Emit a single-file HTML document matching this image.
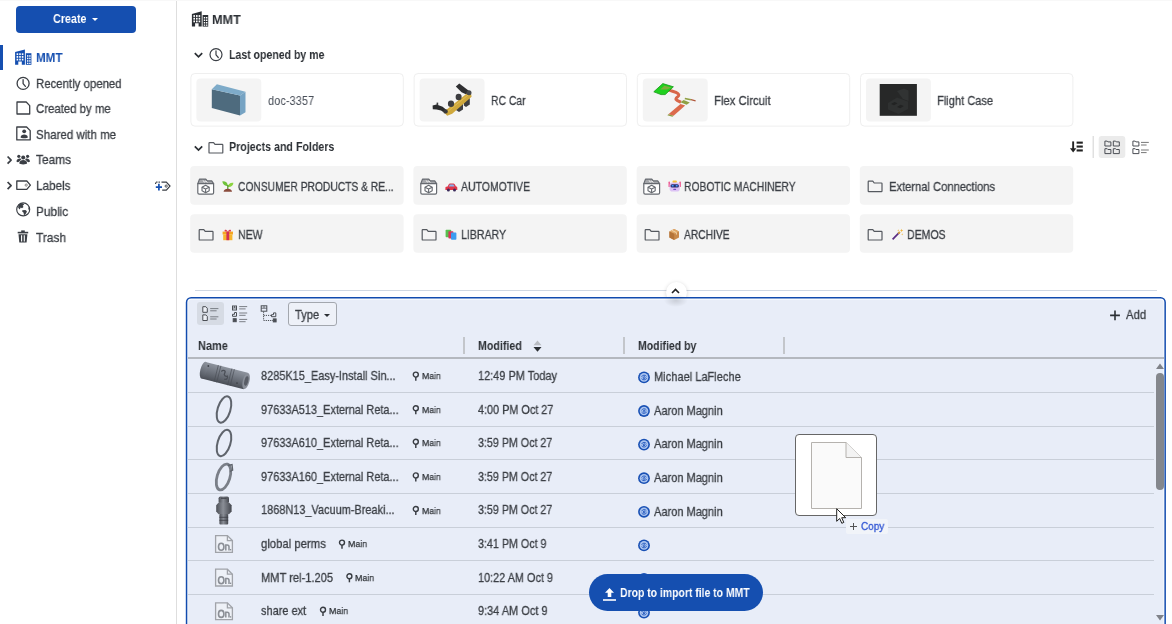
<!DOCTYPE html>
<html><head><meta charset="utf-8"><title>MMT</title>
<style>
html,body{margin:0;padding:0}
body{width:1172px;height:624px;overflow:hidden;position:relative;background:#fff;font-family:"Liberation Sans",sans-serif;color:#3b3f45}
.a{position:absolute}
.t{position:absolute;white-space:nowrap;transform-origin:0 50%;color:#3b3f45;will-change:transform}
svg{position:absolute;overflow:visible}
.card{position:absolute;box-sizing:border-box;border:1px solid #efefef;border-radius:4px;background:#fff}
.thumb{position:absolute;background:#f4f4f4;border-radius:4px}
.fold{position:absolute;background:#f3f3f3;border-radius:4px}
.rl{position:absolute;left:188px;width:966px;height:1px;background:#c9cfd9}
.cs{position:absolute;top:337px;width:2px;height:17px;background:#c3c6cb}
</style></head><body>

<!-- ===== Sidebar ===== -->
<div class="a" style="left:176px;top:0;width:1px;height:624px;background:#dedede"></div>
<div class="a" style="left:0;top:0;width:1172px;height:1px;background:#f8f8f8"></div>
<div class="a" style="left:16px;top:5.5px;width:120px;height:27px;border-radius:4px;background:#154fb0"></div>
<svg style="left:92.3px;top:17.8px" width="6" height="3" viewBox="0 0 6 3"><path d="M0 0h6l-3 3z" fill="#fff"/></svg>
<div class="a" style="left:0;top:45px;width:3px;height:25px;background:#154fb0"></div>
<svg style="left:0;top:0" width="1172" height="624" viewBox="0 0 1172 624">
<defs>
<g id="bld">
 <path d="M15.1 52.1L24.9 49.5V64.8H21.8V61.5H18.3V64.8H15.1z"/>
 <rect x="25.8" y="53.2" width="5.600" height="11.6"/>
 <g fill="#fff">
  <rect x="16.6" y="53.3" width="1.6" height="1.8"/><rect x="19.2" y="53.3" width="1.6" height="1.8"/><rect x="21.8" y="53.3" width="1.6" height="1.8"/>
  <rect x="16.6" y="56" width="1.6" height="1.8"/><rect x="19.2" y="56" width="1.6" height="1.8"/><rect x="21.8" y="56" width="1.6" height="1.8"/>
  <rect x="16.6" y="58.7" width="1.6" height="1.8"/><rect x="19.2" y="58.7" width="1.6" height="1.8"/><rect x="21.8" y="58.7" width="1.6" height="1.8"/>
  <rect x="27" y="55.2" width="1.4" height="1.5"/><rect x="29.2" y="55.2" width="1.4" height="1.5"/>
  <rect x="27" y="57.7" width="1.4" height="1.5"/><rect x="29.2" y="57.7" width="1.4" height="1.5"/>
  <rect x="27" y="60.2" width="1.4" height="1.5"/><rect x="29.2" y="60.2" width="1.4" height="1.5"/>
  <rect x="27" y="62.7" width="1.4" height="1.3"/><rect x="29.2" y="62.7" width="1.4" height="1.3"/>
 </g>
</g>
</defs>
<use href="#bld" fill="#154fb0"/>
<use href="#bld" fill="#2b2f34" transform="translate(176.8,-38.2)"/>
<g fill="none" stroke="#3b3f45" stroke-width="1.3" stroke-linejoin="round">
 <circle cx="23.1" cy="83.4" r="6"/>
 <path d="M23.1 79.6V83.6L25.4 86.3" stroke-linecap="round"/>
 <path d="M17 102H26.2L29.7 105.6V114H17z"/>
 <path d="M16.8 127H26.6L30.2 130.6V139.9H16.8z"/>
 <path d="M16.8 181H26.8L30.4 185.1L26.8 189.3H16.8z"/>
 <path d="M7.6 156.5L11.1 160.1L7.6 163.7" stroke-width="1.7"/>
 <path d="M7.6 182L11.1 185.6L7.6 189.2" stroke-width="1.7"/>
 <circle cx="23.2" cy="209.4" r="6.5" stroke-width="1.15"/>
</g>
<circle cx="26.2" cy="185.1" r="1.1" fill="none" stroke="#777" stroke-width="0.9"/>
<g fill="#3b3f45">
 <circle cx="24.2" cy="131.3" r="1.9"/><path d="M20.6 137.4C20.6 133.6 27.8 133.6 27.8 137.4C27.8 138.4 20.6 138.4 20.6 137.4z"/>
 <!-- teams -->
 <circle cx="23.2" cy="157.4" r="2"/><path d="M19.3 163.3C19.3 159 27.1 159 27.1 163.3C27.1 164.8 19.3 164.8 19.3 163.3z"/>
 <circle cx="18.8" cy="156.3" r="1.6"/><path d="M16.5 161.3C16.5 158 21.3 158 21.3 159.3L19 161.8C18 162.4 16.5 162.2 16.5 161.3z"/>
 <circle cx="27.6" cy="156.3" r="1.6"/><path d="M29.9 161.3C29.9 158 25.1 158 25.1 159.3L27.4 161.8C28.4 162.4 29.9 162.2 29.9 161.3z"/>
 <!-- globe continents -->
 <path d="M18.4 204.600L20.600 203.300L23.200 203.500L24.200 204.800L22.700 205.600L23.500 207.100L22 208.300L20.700 207.600L19.700 209.500L18.200 207.800z"/>
 <path d="M22.300 210.200L25.400 209.900L26.900 211.200L26.300 212.900L25 214.700L23.900 214.900L23.600 212.700L22.200 211.500z"/>
 <path d="M28.500 207L29.500 208.200L29.300 210.200L28.300 209.200z"/>
 <!-- trash -->
 <rect x="21.2" y="230.4" width="3.6" height="1.8"/>
 <rect x="17.7" y="231.8" width="10.5" height="1.6"/>
 <path d="M18.5 234.2H27.4L26.6 242.6H19.3z"/>
</g>
<g stroke="#fff" stroke-width="0.9">
 <path d="M21.600 235.200V241.400M24.300 235.200V241.400" stroke-width="1.100"/>
</g>
<!-- label + -->
<g fill="none" stroke="#3b3f45" stroke-width="1.2">
 <path d="M161.5 182.1H166.3L170 186.1L166.3 190.2H162.2"/>
 <path d="M155.6 184V182.1H160" stroke-dasharray="1.4 1"/>
 <circle cx="166.2" cy="186.1" r="1.1" stroke-width="0.9"/>
</g>
<path d="M158.9 183.8V190.4M155.8 187.1H162" stroke="#154fb0" stroke-width="1.7" fill="none"/>
</svg>


<!-- ===== Main header ===== -->
<!--MAINICONS-->

<!-- cards -->
<svg style="left:0;top:0" width="1172" height="624" viewBox="0 0 1172 624">
<rect x="190.9" y="73.5" width="212.4" height="52.6" rx="4" fill="#fff" stroke="#efefef" stroke-width="1"/>
<rect x="196.4" y="78.4" width="64.9" height="43.2" rx="4" fill="#f4f4f4"/>
<rect x="190.2" y="166.1" width="213.4" height="38.6" rx="4" fill="#f4f4f4"/>
<rect x="190.2" y="214.2" width="213.4" height="38.5" rx="4" fill="#f4f4f4"/>
<rect x="414.1" y="73.5" width="212.4" height="52.6" rx="4" fill="#fff" stroke="#efefef" stroke-width="1"/>
<rect x="419.6" y="78.4" width="64.9" height="43.2" rx="4" fill="#f4f4f4"/>
<rect x="413.4" y="166.1" width="213.4" height="38.6" rx="4" fill="#f4f4f4"/>
<rect x="413.4" y="214.2" width="213.4" height="38.5" rx="4" fill="#f4f4f4"/>
<rect x="637.3" y="73.5" width="212.4" height="52.6" rx="4" fill="#fff" stroke="#efefef" stroke-width="1"/>
<rect x="642.8" y="78.4" width="64.9" height="43.2" rx="4" fill="#f4f4f4"/>
<rect x="636.6" y="166.1" width="213.4" height="38.6" rx="4" fill="#f4f4f4"/>
<rect x="636.6" y="214.2" width="213.4" height="38.5" rx="4" fill="#f4f4f4"/>
<rect x="860.5" y="73.5" width="212.4" height="52.6" rx="4" fill="#fff" stroke="#efefef" stroke-width="1"/>
<rect x="866.0" y="78.4" width="64.9" height="43.2" rx="4" fill="#f4f4f4"/>
<rect x="859.8" y="166.1" width="213.4" height="38.6" rx="4" fill="#f4f4f4"/>
<rect x="859.8" y="214.2" width="213.4" height="38.5" rx="4" fill="#f4f4f4"/>
</svg>
<!--THUMBS-->

<!-- folders -->
<svg style="left:0;top:0" width="1172" height="624" viewBox="0 0 1172 624">
<defs>
 <path id="fld" d="M0.6 1.2Q0.6 0.6 1.2 0.6H5.2L6.6 2.4H13.8Q14.4 2.4 14.4 3V10.4Q14.4 11 13.8 11H1.2Q0.6 11 0.6 10.4z"/>
 <g id="proj" stroke="#666a70">
  <path d="M0.6 5.2L2.3 0.7H8.6L10 2.5H14.5L16.4 5.2z" fill="#a4a6aa"/>
  <path d="M5.6 2.1L7.2 3.5L8.6 2.7L10.2 4" stroke="#fff" stroke-width="0.9" fill="none"/>
  <path d="M0.6 5.2H16.4V14.4Q16.4 15.8 15 15.8H2Q0.6 15.8 0.6 14.4z" fill="#fff"/>
  <path d="M8.4 6.9L12 8.8V12.4L8.4 14.3L4.8 12.4V8.8z" stroke-width="1.1" fill="none"/>
  <path d="M4.8 8.8L8.4 10.6L12 8.8M8.4 10.6V14.3" stroke-width="1.1" fill="none"/>
 </g>
</defs>
<g fill="none" stroke="#2b2f34" stroke-width="1.7">
 <path d="M194.8 53.2L198.5 56.9L202.2 53.2"/>
 <path d="M194.8 146.4L198.5 150.1L202.2 146.4"/>
</g>
<g fill="none" stroke="#55595f" stroke-width="1.2" stroke-linejoin="round">
 <circle cx="216" stroke="#3b3f45" cy="54.6" r="6"/>
 <path d="M216 50.8V54.8L218.3 57.5" stroke-linecap="round" stroke="#3b3f45"/>
 <use href="#fld" x="208.4" y="142"/>
 <use href="#fld" x="198.6" y="229"/>
 <use href="#fld" x="421.6" y="229"/>
 <use href="#fld" x="644.6" y="229"/>
 <use href="#fld" x="867.6" y="229"/>
 <use href="#fld" x="867.6" y="180.6"/>
 <use href="#proj" x="197.2" y="178.4" stroke-width="1.2"/>
 <use href="#proj" x="420.2" y="178.4" stroke-width="1.2"/>
 <use href="#proj" x="643.2" y="178.4" stroke-width="1.2"/>
</g>
<!-- emoji: seedling -->
<g>
 <path d="M227.6 186C225.5 186 222.6 184.6 222.4 181.2C225.6 181 227.6 182.6 227.8 185.4z" fill="#6fc23a"/>
 <path d="M227.8 187C228 184.4 230 182.4 233.4 182.8C233.4 185.6 231 187.4 227.8 187z" fill="#8bd33f"/>
 <rect x="227.2" y="185" width="1.2" height="4" fill="#4c9a2a"/>
 <path d="M223.6 191.8C223.6 187.6 232 187.6 232 191.8z" fill="#8a4b3c"/>
</g>
<!-- car -->
<g>
 <path d="M445.4 190V187.8Q445.4 187 446.2 186.8L447.6 186.4L448.8 184.3Q449.2 183.6 450 183.6H453.4Q454.2 183.6 454.7 184.3L456 186.4L456.6 186.6Q457.3 186.9 457.3 187.7V190z" fill="#e0364a"/>
 <path d="M448.8 186.4L449.8 184.6H453.4L454.6 186.4z" fill="#86b4ee"/>
 <circle cx="448.4" cy="190.1" r="1.5" fill="#3a2a5a"/><circle cx="454.5" cy="190.1" r="1.5" fill="#3a2a5a"/>
</g>
<!-- robot -->
<g>
 <rect x="668.5" y="181.600" width="1.500" height="5.400" rx="0.600" fill="#ee5c92"/><rect x="679.400" y="181.600" width="1.500" height="5.400" rx="0.600" fill="#ee5c92"/>
 <rect x="672.5" y="180.600" width="4.400" height="2.400" rx="1" fill="#f5c33b"/>
 <rect x="669.600" y="182.600" width="10.200" height="9" rx="2.800" fill="#dcc2f4"/>
 <rect x="670.500" y="184.200" width="8.400" height="3.300" rx="1.500" fill="#2b2a6a"/>
 <rect x="671.700" y="185" width="2" height="1.600" rx="0.500" fill="#3fa0ff"/><rect x="675.700" y="185" width="2" height="1.600" rx="0.500" fill="#3fa0ff"/>
 <rect x="673.300" y="188.800" width="2.800" height="1.300" rx="0.400" fill="#7b4fc4"/>
</g>
<!-- gift -->
<g>
 <rect x="222.6" y="231.6" width="10.4" height="2.9" fill="#f5a623"/>
 <rect x="223.2" y="234.4" width="9.2" height="5.800" fill="#f8b62e"/>
 <rect x="226.4" y="231.6" width="2.800" height="8.600" fill="#d22f56"/>
 <path d="M227.8 231.6C226.4 229 223.8 229.4 224.8 231.6zM227.8 231.6C229.2 229 231.8 229.4 230.8 231.6z" fill="#e03a4e"/>
</g>
<!-- books -->
<g>
 <rect x="445.6" y="229.8" width="5.6" height="7.4" rx="0.8" fill="#58c04e"/>
 <rect x="448.4" y="231.2" width="5" height="7.4" rx="0.8" fill="#d8365c"/>
 <rect x="451" y="232.6" width="5.4" height="7.2" rx="0.8" fill="#3c9cf0"/>
</g>
<!-- package -->
<g>
 <path d="M674.2 229L679 231.4V237.4L674.2 240L669.4 237.4V231.4z" fill="#c98a4b"/>
 <path d="M674.2 229L679 231.4L674.2 233.8L669.4 231.4z" fill="#e0a868"/>
 <path d="M674.2 233.8V240L669.4 237.4V231.4z" fill="#b57438"/>
 <path d="M671.6 230.2L676.4 232.6V234.6" fill="none" stroke="#f3d9b0" stroke-width="0.9"/>
</g>
<!-- wand -->
<g>
 <path d="M892.6 239.4L899.4 232.4" stroke="#5b2c83" stroke-width="1.7" fill="none"/>
 <path d="M898.2 233.6L900 231.8" stroke="#d9a43a" stroke-width="1.7" fill="none"/>
 <path d="M901.6 228.8l.5 1.2 1.2.5-1.2.5-.5 1.2-.5-1.2-1.2-.5 1.2-.5zM898.2 229.2l.3.8.8.3-.8.3-.3.8-.3-.8-.8-.3.8-.3zM902.2 233.2l.3.8.8.3-.8.3-.3.8-.3-.8-.8-.3.8-.3z" fill="#f0b63c"/>
</g>
<!-- sort / view toggle -->
<g fill="#222">
 <rect x="1072.2" y="141.4" width="1.9" height="8"/>
 <path d="M1069.9 148.2H1076.4L1073.15 152.4z"/>
 <rect x="1076.6" y="141.6" width="6.2" height="2.1"/><rect x="1076.6" y="145.5" width="6.2" height="2.1"/><rect x="1076.6" y="149.4" width="6.2" height="2.1"/>
</g>
<rect x="1092.6" y="136" width="1.2" height="22" fill="#d9d9d9"/>
<rect x="1098.7" y="136" width="26.6" height="22" rx="3" fill="#ebebeb"/>
<g fill="none" stroke="#4a4e54" stroke-width="1">
 <path id="sf" d="M1104.9 141.1H1107.2L1107.9 141.9H1110.9V146H1104.9z"/>
 <use href="#sf" x="8.4"/><use href="#sf" y="7.6"/><use href="#sf" x="8.4" y="7.6"/>
 <use href="#sf" x="28"/><use href="#sf" x="28" y="7.6"/>
 <path d="M1141 142.4H1148.8M1141 145H1146.6M1141 150H1148.8M1141 152.6H1146.6" stroke="#777" />
</g>
</svg>


<!-- divider -->
<div class="a" style="left:195px;top:289.5px;width:962px;height:1.5px;background:#cfd7e2"></div>
<div class="a" style="left:665.5px;top:282px;width:21px;height:21px;border-radius:11px;background:#fff;box-shadow:0 1px 4px rgba(0,0,0,.18)"></div>

<!-- ===== Table panel ===== -->
<svg style="left:0;top:0" width="1172" height="624" viewBox="0 0 1172 624">
<defs><radialGradient id="sm"><stop offset="0" stop-color="#000" stop-opacity="0.13"/><stop offset="1" stop-color="#000" stop-opacity="0"/></radialGradient></defs>
<rect x="186.55" y="297.65" width="978.6" height="340" rx="4.6" fill="#fbfcfe" stroke="#114bae" stroke-width="1.5"/>
<rect x="188.2" y="299.7" width="975.3" height="340" rx="3" fill="#e8edf8"/>
<ellipse cx="675.9" cy="300.5" rx="12" ry="6.5" fill="url(#sm)"/>
</svg>
<svg style="left:671.1px;top:288.3px" width="9" height="6" viewBox="0 0 9 6"><path d="M1 5l3.5-3.5L8 5" fill="none" stroke="#222" stroke-width="1.6"/></svg>
<!-- toolbar -->
<div class="a" style="left:197px;top:302px;width:27px;height:23px;border-radius:3px;background:#d6dbe4"></div>
<div class="a" style="left:288px;top:302px;width:49px;height:24px;box-sizing:border-box;border:1px solid #a3a7ae;border-radius:3px;background:#eef1f8"></div>
<svg style="left:324px;top:313.5px" width="6" height="3" viewBox="0 0 6 3"><path d="M0 0h6l-3 3z" fill="#2b2f34"/></svg>
<!--TOOLICONS-->
<!-- header -->
<div class="cs" style="left:463px"></div>
<div class="cs" style="left:623px"></div>
<div class="cs" style="left:782.5px"></div>
<div class="a" style="left:188px;top:357px;width:976px;height:1.5px;background:#b4b8bf"></div>
<svg style="left:532.5px;top:339.5px" width="9" height="12" viewBox="0 0 9 12"><path d="M0.5 5.2h8L4.5 0.4z" fill="#b9bcc2"/><path d="M0.5 7h8L4.5 11.8z" fill="#2b2f34"/></svg>
<!-- row lines -->
<div class="rl" style="top:392px"></div>
<div class="rl" style="top:425.5px"></div>
<div class="rl" style="top:459px"></div>
<div class="rl" style="top:493px"></div>
<div class="rl" style="top:526.5px"></div>
<div class="rl" style="top:560px"></div>
<div class="rl" style="top:593.5px"></div>
<svg style="left:0;top:0" width="1172" height="624" viewBox="0 0 1172 624">
<defs>
 <linearGradient id="cyl" x1="0" y1="0" x2="0" y2="1"><stop offset="0" stop-color="#9a9ea6"/><stop offset="0.35" stop-color="#6d717a"/><stop offset="1" stop-color="#4a4d55"/></linearGradient>
 <linearGradient id="plg" x1="0" y1="0" x2="1" y2="0"><stop offset="0" stop-color="#4d5057"/><stop offset="0.45" stop-color="#8a8e96"/><stop offset="1" stop-color="#44474e"/></linearGradient>
 <g id="ondoc">
  <path d="M0.6 0.6H12.4L17.4 5.6V17.4H0.6z" fill="#eef1f7" stroke="#a0a3a9" stroke-width="1.3"/>
  <path d="M12.4 0.6V5.6H17.4" fill="none" stroke="#a0a3a9" stroke-width="1.3"/>
  <path d="M6.2 8.2C8 8.2 8.9 9.6 8.9 11.7C8.9 13.8 8 15.2 6.2 15.2C4.4 15.2 3.5 13.8 3.5 11.7C3.5 9.6 4.4 8.2 6.2 8.2z" fill="none" stroke="#8b8f96" stroke-width="1.6"/>
  <path d="M10.8 15.4V10H12.2Q14 10 14 11.8V15.4" fill="none" stroke="#8b8f96" stroke-width="1.5"/>
  <rect x="15" y="14" width="1.2" height="1.4" fill="#8b8f96"/>
 </g>
 <g id="pin">
  <circle cx="3.4" cy="3.3" r="2.5" fill="none" stroke="#383c42" stroke-width="1.4"/>
  <path d="M3.4 5.8V9.4" stroke="#383c42" stroke-width="1.45"/>
 </g>
 <g id="av">
  <circle cx="6" cy="6" r="5.9" fill="#1850b4"/>
  <circle cx="6" cy="6" r="4.3" fill="#a9c3ef"/>
  <path d="M3.6 5.4C4.400 3.400 7.400 3.200 8.400 5M8.600 6.800C7.800 8.800 4.800 9 3.600 7.200M5 6.200L6.400 5L7.200 6.400L5.800 7.400z" fill="none" stroke="#2f62c2" stroke-width="1"/>
 </g>
</defs>
<!-- card thumbnails -->
<g>
 <path d="M211.8 89.2L240 95.6V115.6L211.8 107.9z" fill="#4e6b7e"/>
 <path d="M211.8 89.2L216.9 84.2L245.5 91.8L240 95.6z" fill="#7eabc9"/>
 <path d="M240 95.6L245.5 91.8V112.2L240 115.6z" fill="#76a3c3"/>
</g>
<g>
 <path d="M455.8 86.6L459.3 83.6L468.8 90.8L466.4 94.6L461.6 92.2z" fill="#2e2f31"/>
 <path d="M432.6 105.4L436.6 104.6L442.6 106.8L447.4 110.8L445.4 113.6L441 110.4L436.6 109.4L432.8 109.2z" fill="#2a2b2d"/>
 <rect x="436.6" y="102.600" width="1.600" height="2.600" fill="#3a3b3d"/>
 <path d="M456 105L460 102.400L463 104V109.400L459 112L456 110z" fill="#3e3f42"/>
 <path d="M463.800 99.200L467.400 96.800L469.800 98.400V104.400L466 107L463.800 105.400z" fill="#3e3f42"/>
 <path d="M443.400 111.800L448 108.400L467.200 93.300L470.800 92.400L471.600 96.800L452.200 113.800L447.200 115.800z" fill="#cfa83c"/>
 <path d="M446 112.800L468.600 94.600" stroke="#e3c056" stroke-width="0.9" fill="none"/>
 <ellipse cx="451" cy="103.800" rx="3.100" ry="3.300" fill="#3c3d40"/>
 <ellipse cx="458.600" cy="97" rx="3" ry="3.200" fill="#3c3d40"/>
 <circle cx="469" cy="92.800" r="2.500" fill="#47494c"/>
 <circle cx="445.600" cy="111.400" r="2.200" fill="#38393b"/>
</g>
<g>
 <path d="M669 90.200C673 91.600 676 92 678 93.600C681 96 675 97.600 676 99.400C677 101 679 101.400 681 102.200" fill="none" stroke="#d8674a" stroke-width="3"/>
 <path d="M680.5 104L685.2 105.600L673.600 115.800L668.400 114.200z" fill="#dc6a4c"/>
 <path d="M668.400 114.200L673.600 115.800L672.400 116.800L667.400 115.200z" fill="#8a9a3e"/>
 <path d="M653.800 91.800L662.800 83.600L673.400 86.800L665.200 94.600L661 94.600z" fill="#1fd11f" stroke="#179a17" stroke-width="0.8"/>
 <path d="M660.200 89.400L664.400 85.800L671.400 87.400L667 89.600z" fill="#7fae3c"/>
 <path d="M680.400 102.200L683.600 100.100L689.800 102.500L686.600 104.700z" fill="#8fa043"/>
 <path d="M685 97.800L691.200 99L690.600 100.400L684.600 99.200z" fill="#8fa043"/>
 <path d="M691 99.600L695.600 100.800" stroke="#b0563a" stroke-width="1.200"/>
</g>
<g>
 <rect x="879.700" y="84" width="37.200" height="31.800" fill="#272828"/>
 <path d="M888 103L897 97.500L908 101.500V109L898.500 114L888 109.500z" fill="#2f3131"/>
 <path d="M897 91L904 88.500L908.500 90.500V101L903 99z" fill="#313333"/>
 <path d="M891 104L894.500 102L897.500 103.200L894 105.300zM897 107L900.500 104.800L903.800 106L900.300 108.300z" fill="#222323"/>
</g>
<!-- toolbar icons -->
<g fill="none" stroke="#4a4e54" stroke-width="1">
 <path d="M202.800 306.700H205.800L207.300 308.200V312.300H202.800zM202.800 314.900H205.800L207.300 316.400V320.500H202.800z" fill="#eef1f7"/>
 <path d="M210.200 308.600H218.400M210.200 310.800H216.600M210.200 316.800H218.400M210.200 319H216.600" stroke="#7a7e85"/>
 <rect x="232.500" y="306" width="4" height="4"/><path d="M232.500 308H236.500M234.500 306V308" stroke-width="0.8"/>
 <path d="M232.500 316.300V314.300H234.500V312.500H236.500V316.300z"/>
 <rect x="233.200" y="318.700" width="3" height="3" fill="#4a4e54"/>
 <path d="M239.200 306.600H247.200M239.200 308.900H245.600M239.200 313H247.200M239.200 315.300H245.600M239.200 319.400H247.200M239.200 321.700H245.600" stroke="#7a7e85"/>
 <rect x="261.200" y="305.800" width="5.600" height="5.400"/><path d="M261.200 308.200H266.800M264 305.800V308.200" stroke-width="0.8"/>
 <path d="M263.600 311.600V320.500H273" stroke-dasharray="1.2 1"/><path d="M263.600 315.400H271" stroke-dasharray="1.2 1"/>
 <path d="M271.500 316.700V314.700H273.500V312.900H275.800V316.700z"/>
 <rect x="273.300" y="318.900" width="2.800" height="3" fill="#4a4e54"/>
</g>
<path d="M1115 310.500V320.300M1110.100 315.400H1119.900" stroke="#2b2f34" stroke-width="1.600" fill="none"/>
<!-- row thumbnails -->
<g>
 <linearGradient id="cg" gradientUnits="userSpaceOnUse" x1="205.7" y1="361.9" x2="201.5" y2="378.5"><stop offset="0" stop-color="#8e949e"/><stop offset="0.3" stop-color="#7b818b"/><stop offset="0.75" stop-color="#5d626b"/><stop offset="1" stop-color="#4a4e56"/></linearGradient>
 <path d="M205.7 361.9 L247.9 372.7 L243.7 389.3 L201.5 378.5 z" fill="url(#cg)"/>
 <ellipse cx="203.6" cy="370.2" rx="3.3" ry="8.6" transform="rotate(14.4 203.6 370.2)" fill="url(#cg)"/>
 <path d="M218.4 365.1 L214.1 381.8" stroke="#4a4e56" stroke-width="0.9" opacity="0.75"/>
 <path d="M220.9 365.8 L216.7 382.4" stroke="#4a4e56" stroke-width="0.9" opacity="0.75"/>
 <path d="M231.9 368.6 L227.6 385.2" stroke="#4a4e56" stroke-width="0.9" opacity="0.75"/>
 <path d="M234.4 369.2 L230.2 385.9" stroke="#4a4e56" stroke-width="0.9" opacity="0.75"/>
 <ellipse cx="246.1" cy="381.0" rx="3.3" ry="8.3" transform="rotate(14.4 246.1 381.0)" fill="#8a8f99"/>
 <ellipse cx="246.3" cy="381.0" rx="1.9" ry="4.8" transform="rotate(14.4 246.3 381.0)" fill="#595d66"/>
 <path d="M221.3 371.5 c2 -2 5 -1 3.4 1.600 c-1.400 2.200 1 3.800 2.600 3 c1 2 -1 4 -3 3" fill="none" stroke="#4b4f57" stroke-width="1.300"/>
 <circle cx="208.3" cy="366.0" r="0.9" fill="#3f434a"/><circle cx="237.0" cy="383.1" r="0.9" fill="#3f434a"/>
</g>
<g fill="none" stroke="#5f646c">
 <ellipse cx="224" cy="409.500" rx="6.400" ry="13.600" transform="rotate(17 224 409.500)" stroke-width="2"/>
 <ellipse cx="224" cy="443" rx="6.400" ry="13.600" transform="rotate(17 224 443)" stroke-width="2"/>
 <ellipse cx="223.500" cy="477" rx="6.400" ry="13.400" transform="rotate(17 223.500 477)" stroke-width="2.800" stroke="#7a7f88"/>
 <path d="M228 465.500L232 464.500L232.600 470L230 471.500" stroke-width="1.400"/>
</g>
<g>
 <rect x="218.600" y="496.400" width="10.400" height="6.800" rx="1.800" fill="url(#plg)"/>
 <path d="M216.200 505.200L218.600 502.600H229L231.600 505.200V511.400L229 514.200H218.600L216.200 511.400z" fill="url(#plg)"/>
 <rect x="219.400" y="514" width="8.800" height="10.400" rx="1" fill="url(#plg)"/>
 <path d="M219.400 517.300H228.200M219.400 520.300H228.200" stroke="#3d4047" stroke-width="0.800"/>
 <path d="M221 498.200H226.600" stroke="#40434a" stroke-width="1.200"/>
</g>
<use href="#ondoc" x="215" y="535"/>
<use href="#ondoc" x="215" y="568.600"/>
<use href="#ondoc" x="215" y="602.200"/>
<!-- pins -->
<use href="#pin" x="412.400" y="371.300"/><use href="#pin" x="412.400" y="404.900"/><use href="#pin" x="412.400" y="438.500"/><use href="#pin" x="412.400" y="472.100"/><use href="#pin" x="412.400" y="505.700"/>
<use href="#pin" x="338.600" y="539.300"/><use href="#pin" x="346" y="572.900"/><use href="#pin" x="319.600" y="606.500"/>
<!-- avatars -->
<use href="#av" x="638" y="371.400"/><use href="#av" x="638" y="405"/><use href="#av" x="638" y="438.600"/><use href="#av" x="638" y="472.200"/><use href="#av" x="638" y="505.800"/><use href="#av" x="638" y="539.400"/><use href="#av" x="638" y="573"/><use href="#av" x="638" y="606.600"/>
</svg>

<!-- scrollbar -->
<svg style="left:1155.5px;top:363px" width="8" height="6" viewBox="0 0 8 6"><path d="M0 6h8L4 0.5z" fill="#7f8289"/></svg>
<div class="a" style="left:1156px;top:373px;width:7.5px;height:117px;border-radius:4px;background:#84878d"></div>
<svg style="left:1155.5px;top:615px" width="8" height="6" viewBox="0 0 8 6"><path d="M0 0h8L4 5.5z" fill="#7f8289"/></svg>

<!-- drop pill -->
<div class="a" style="left:589px;top:574px;width:173.5px;height:37px;border-radius:18.5px;background:#154fb0"></div>
<svg style="left:603px;top:587.5px" width="13" height="13" viewBox="0 0 13 13"><path d="M6.5 0L11 4.8H8.3V9H4.7V4.8H2z" fill="#fff"/><rect x="0" y="11.2" width="13" height="1.6" fill="#fff"/></svg>

<!-- drag ghost -->
<div class="a" style="left:795px;top:434px;width:82px;height:82px;box-sizing:border-box;border:1px solid #666;border-radius:4px;background:#fff"></div>
<svg style="left:811px;top:442px" width="51" height="67" viewBox="0 0 51 67"><path d="M0.5 0.5H35L50.5 15.5V66.5H0.5z" fill="#fafafa" stroke="#b5b2ae" stroke-width="1"/><path d="M35 0.5V15.5H50.5" fill="#f3f3f3" stroke="#b5b2ae" stroke-width="1"/></svg>
<div class="a" style="left:846px;top:519px;width:42px;height:14.5px;border-radius:2px;background:#f1f4f9"></div>
<svg style="left:849.5px;top:522.5px" width="7" height="7" viewBox="0 0 7 7"><path d="M3.5 0v7M0 3.5h7" stroke="#555" stroke-width="1"/></svg>
<svg style="left:836px;top:507.5px" width="11" height="17" viewBox="0 0 11 17"><path d="M0.7 0.7V13.3L3.7 10.5L5.8 15.3L7.8 14.4L5.7 9.7H9.7z" fill="#fff" stroke="#222" stroke-width="1"/></svg>

<span class="t" style="left:53.4px;top:10.2px;font-size:13px;line-height:17px;transform:scaleX(0.8253);font-weight:700;color:#fff">Create</span>
<span class="t" style="left:36.4px;top:49.0px;font-size:13px;line-height:17px;transform:scaleX(0.8916);font-weight:700;color:#154fb0">MMT</span>
<span class="t" style="left:36.2px;top:74.9px;font-size:13px;line-height:17px;transform:scaleX(0.8772);-webkit-text-stroke:0.3px">Recently opened</span>
<span class="t" style="left:36.2px;top:100.3px;font-size:13px;line-height:17px;transform:scaleX(0.8761);-webkit-text-stroke:0.3px">Created by me</span>
<span class="t" style="left:36.2px;top:125.6px;font-size:13px;line-height:17px;transform:scaleX(0.8868);-webkit-text-stroke:0.3px">Shared with me</span>
<span class="t" style="left:36.2px;top:150.5px;font-size:13px;line-height:17px;transform:scaleX(0.9165);-webkit-text-stroke:0.3px">Teams</span>
<span class="t" style="left:36.2px;top:176.7px;font-size:13px;line-height:17px;transform:scaleX(0.9005);-webkit-text-stroke:0.3px">Labels</span>
<span class="t" style="left:36.2px;top:202.5px;font-size:13px;line-height:17px;transform:scaleX(0.9062);-webkit-text-stroke:0.3px">Public</span>
<span class="t" style="left:36.2px;top:228.6px;font-size:13px;line-height:17px;transform:scaleX(0.9191);-webkit-text-stroke:0.3px">Trash</span>
<span class="t" style="left:212.3px;top:10.5px;font-size:13px;line-height:17px;transform:scaleX(0.9727);font-weight:700;color:#2b2f34">MMT</span>
<span class="t" style="left:229.2px;top:45.5px;font-size:13px;line-height:17px;transform:scaleX(0.8102);font-weight:700;color:#2b2f34">Last opened by me</span>
<span class="t" style="left:229.2px;top:138.2px;font-size:13px;line-height:17px;transform:scaleX(0.8196);font-weight:700;color:#2b2f34">Projects and Folders</span>
<span class="t" style="left:267.6px;top:91.5px;font-size:13px;line-height:17px;transform:scaleX(0.8521);color:#4a505a">doc-3357</span>
<span class="t" style="left:490.7px;top:91.5px;font-size:13px;line-height:17px;transform:scaleX(0.7983);-webkit-text-stroke:0.3px">RC Car</span>
<span class="t" style="left:714.2px;top:91.5px;font-size:13px;line-height:17px;transform:scaleX(0.8706);-webkit-text-stroke:0.3px">Flex Circuit</span>
<span class="t" style="left:937.2px;top:91.5px;font-size:13px;line-height:17px;transform:scaleX(0.8532);-webkit-text-stroke:0.3px">Flight Case</span>
<span class="t" style="left:237.7px;top:177.6px;font-size:13px;line-height:17px;transform:scaleX(0.7891);-webkit-text-stroke:0.3px">CONSUMER PRODUCTS &amp; RE...</span>
<span class="t" style="left:460.7px;top:177.6px;font-size:13px;line-height:17px;transform:scaleX(0.8061);-webkit-text-stroke:0.3px">AUTOMOTIVE</span>
<span class="t" style="left:684.2px;top:177.6px;font-size:13px;line-height:17px;transform:scaleX(0.7937);-webkit-text-stroke:0.3px">ROBOTIC MACHINERY</span>
<span class="t" style="left:889.2px;top:177.6px;font-size:13px;line-height:17px;transform:scaleX(0.8586);-webkit-text-stroke:0.3px">External Connections</span>
<span class="t" style="left:237.7px;top:225.6px;font-size:13px;line-height:17px;transform:scaleX(0.8107);-webkit-text-stroke:0.3px">NEW</span>
<span class="t" style="left:460.7px;top:225.6px;font-size:13px;line-height:17px;transform:scaleX(0.8140);-webkit-text-stroke:0.3px">LIBRARY</span>
<span class="t" style="left:684.2px;top:225.6px;font-size:13px;line-height:17px;transform:scaleX(0.7890);-webkit-text-stroke:0.3px">ARCHIVE</span>
<span class="t" style="left:907.2px;top:225.6px;font-size:13px;line-height:17px;transform:scaleX(0.8097);-webkit-text-stroke:0.3px">DEMOS</span>
<span class="t" style="left:294.7px;top:306.1px;font-size:13px;line-height:17px;transform:scaleX(0.8550);-webkit-text-stroke:0.3px">Type</span>
<span class="t" style="left:1126.0px;top:306.0px;font-size:13px;line-height:17px;transform:scaleX(0.8686);-webkit-text-stroke:0.3px">Add</span>
<span class="t" style="left:198.4px;top:337.9px;font-size:12px;line-height:16px;transform:scaleX(0.9147);font-weight:700;color:#2b2f34">Name</span>
<span class="t" style="left:478.3px;top:337.9px;font-size:12px;line-height:16px;transform:scaleX(0.8879);font-weight:700;color:#2b2f34">Modified</span>
<span class="t" style="left:638.4px;top:337.9px;font-size:12px;line-height:16px;transform:scaleX(0.8744);font-weight:700;color:#2b2f34">Modified by</span>
<span class="t" style="left:260.7px;top:367.0px;font-size:13px;line-height:17px;transform:scaleX(0.8427);-webkit-text-stroke:0.3px">8285K15_Easy-Install Sin...</span>
<span class="t" style="left:421.5px;top:370.2px;font-size:9px;line-height:13px;transform:scaleX(0.9633);-webkit-text-stroke:0.25px;color:#2f3338">Main</span>
<span class="t" style="left:260.7px;top:400.6px;font-size:13px;line-height:17px;transform:scaleX(0.8424);-webkit-text-stroke:0.3px">97633A513_External Reta...</span>
<span class="t" style="left:421.5px;top:403.8px;font-size:9px;line-height:13px;transform:scaleX(0.9633);-webkit-text-stroke:0.25px;color:#2f3338">Main</span>
<span class="t" style="left:260.7px;top:434.2px;font-size:13px;line-height:17px;transform:scaleX(0.8424);-webkit-text-stroke:0.3px">97633A610_External Reta...</span>
<span class="t" style="left:421.5px;top:437.4px;font-size:9px;line-height:13px;transform:scaleX(0.9633);-webkit-text-stroke:0.25px;color:#2f3338">Main</span>
<span class="t" style="left:260.7px;top:467.8px;font-size:13px;line-height:17px;transform:scaleX(0.8424);-webkit-text-stroke:0.3px">97633A160_External Reta...</span>
<span class="t" style="left:421.5px;top:471.0px;font-size:9px;line-height:13px;transform:scaleX(0.9633);-webkit-text-stroke:0.25px;color:#2f3338">Main</span>
<span class="t" style="left:260.7px;top:501.4px;font-size:13px;line-height:17px;transform:scaleX(0.8416);-webkit-text-stroke:0.3px">1868N13_Vacuum-Breaki...</span>
<span class="t" style="left:421.5px;top:504.6px;font-size:9px;line-height:13px;transform:scaleX(0.9633);-webkit-text-stroke:0.25px;color:#2f3338">Main</span>
<span class="t" style="left:260.7px;top:535.0px;font-size:13px;line-height:17px;transform:scaleX(0.8719);-webkit-text-stroke:0.3px">global perms</span>
<span class="t" style="left:347.7px;top:538.2px;font-size:9px;line-height:13px;transform:scaleX(0.9787);-webkit-text-stroke:0.25px;color:#2f3338">Main</span>
<span class="t" style="left:260.7px;top:568.6px;font-size:13px;line-height:17px;transform:scaleX(0.8553);-webkit-text-stroke:0.3px">MMT rel-1.205</span>
<span class="t" style="left:355.2px;top:571.8px;font-size:9px;line-height:13px;transform:scaleX(0.9787);-webkit-text-stroke:0.25px;color:#2f3338">Main</span>
<span class="t" style="left:260.7px;top:602.2px;font-size:13px;line-height:17px;transform:scaleX(0.8451);-webkit-text-stroke:0.3px">share ext</span>
<span class="t" style="left:328.7px;top:605.4px;font-size:9px;line-height:13px;transform:scaleX(0.9787);-webkit-text-stroke:0.25px;color:#2f3338">Main</span>
<span class="t" style="left:478.3px;top:367.0px;font-size:13px;line-height:17px;transform:scaleX(0.8429);-webkit-text-stroke:0.3px">12:49 PM Today</span>
<span class="t" style="left:478.3px;top:400.6px;font-size:13px;line-height:17px;transform:scaleX(0.8347);-webkit-text-stroke:0.3px">4:00 PM Oct 27</span>
<span class="t" style="left:478.3px;top:434.2px;font-size:13px;line-height:17px;transform:scaleX(0.8226);-webkit-text-stroke:0.3px">3:59 PM Oct 27</span>
<span class="t" style="left:478.3px;top:467.8px;font-size:13px;line-height:17px;transform:scaleX(0.8226);-webkit-text-stroke:0.3px">3:59 PM Oct 27</span>
<span class="t" style="left:478.3px;top:501.4px;font-size:13px;line-height:17px;transform:scaleX(0.8226);-webkit-text-stroke:0.3px">3:59 PM Oct 27</span>
<span class="t" style="left:478.3px;top:535.0px;font-size:13px;line-height:17px;transform:scaleX(0.8244);-webkit-text-stroke:0.3px">3:41 PM Oct 9</span>
<span class="t" style="left:478.3px;top:568.6px;font-size:13px;line-height:17px;transform:scaleX(0.8370);-webkit-text-stroke:0.3px">10:22 AM Oct 9</span>
<span class="t" style="left:478.3px;top:602.2px;font-size:13px;line-height:17px;transform:scaleX(0.8437);-webkit-text-stroke:0.3px">9:34 AM Oct 9</span>
<span class="t" style="left:654.1px;top:368.2px;font-size:13px;line-height:17px;transform:scaleX(0.8509);-webkit-text-stroke:0.3px">Michael LaFleche</span>
<span class="t" style="left:654.1px;top:401.8px;font-size:13px;line-height:17px;transform:scaleX(0.8486);-webkit-text-stroke:0.3px">Aaron Magnin</span>
<span class="t" style="left:654.1px;top:435.4px;font-size:13px;line-height:17px;transform:scaleX(0.8486);-webkit-text-stroke:0.3px">Aaron Magnin</span>
<span class="t" style="left:654.1px;top:469.0px;font-size:13px;line-height:17px;transform:scaleX(0.8486);-webkit-text-stroke:0.3px">Aaron Magnin</span>
<span class="t" style="left:654.1px;top:502.6px;font-size:13px;line-height:17px;transform:scaleX(0.8486);-webkit-text-stroke:0.3px">Aaron Magnin</span>
<span class="t" style="left:620.0px;top:583.7px;font-size:13px;line-height:17px;transform:scaleX(0.8012);font-weight:700;color:#fff">Drop to import file to MMT</span>
<span class="t" style="left:860.5px;top:519.0px;font-size:11.5px;line-height:15.5px;transform:scaleX(0.8675);-webkit-text-stroke:0.3px;color:#2f55d4">Copy</span>
</body></html>
